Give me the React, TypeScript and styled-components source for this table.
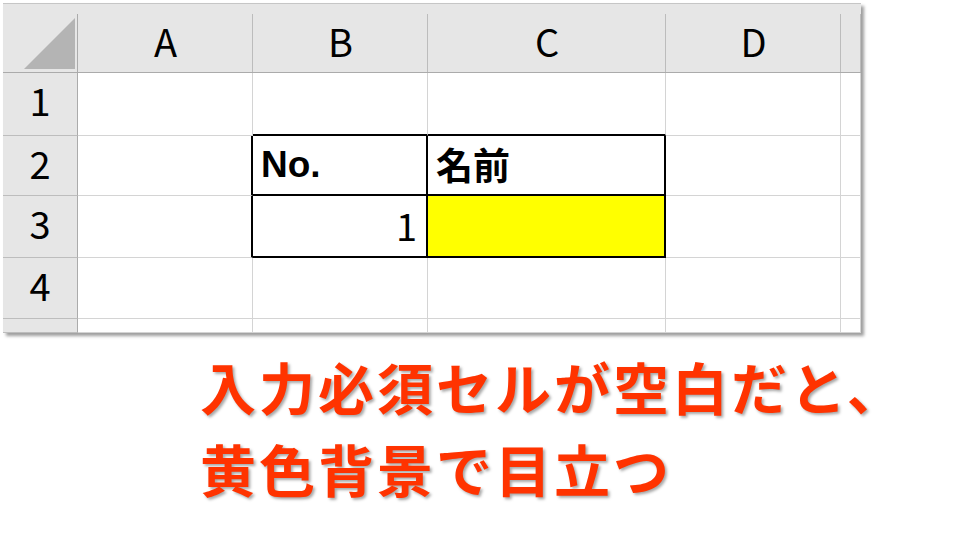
import React from "react";
import styled, { createGlobalStyle } from "styled-components";

const GlobalStyle = createGlobalStyle`
  html, body {
    margin: 0;
    padding: 0;
    background: #ffffff;
  }
  * {
    box-sizing: border-box;
  }
`;

const Page = styled.div`
  width: 955px;
  height: 555px;
  overflow: hidden;
  background: #ffffff;
  padding: 3px 0 0 3px;
`;

const Sheet = styled.div`
  display: grid;
  grid-template-columns: 75px 175px 175px 238px 175px 20px;
  grid-template-rows: 70px 63px 60px 62px 61px 14px;
  width: 858px;
  height: 330px;
  overflow: hidden;
  background: #ffffff;
  box-shadow: 3px 3px 3px rgba(0, 0, 0, 0.38);
  font-family: "Noto Sans CJK JP", "Noto Sans", sans-serif;
  color: #000000;
`;

const HeaderCell = styled.div`
  display: flex;
  align-items: center;
  justify-content: center;
  padding-top: 6px;
  border-top: 1px solid #c6c6c6;
  border-bottom: 1px solid #ababab;
  background: linear-gradient(#bcbcbc, #bcbcbc) right bottom / 1px
      calc(100% - 10px) no-repeat,
    #e6e6e6;
  font-size: 38px;
  font-weight: 400;
  line-height: 1;
`;

const CornerCell = styled(HeaderCell)`
  justify-content: flex-end;
  align-items: flex-end;
  padding: 0 3px 3px 0;
  background: linear-gradient(#ababab, #ababab) right bottom / 1px
      calc(100% - 10px) no-repeat,
    #e6e6e6;
`;

const Triangle = styled.div`
  width: 51px;
  height: 51px;
  background: #b4b4b4;
  clip-path: polygon(100% 0, 100% 100%, 0 100%);
`;

const RowLabel = styled.div`
  display: flex;
  align-items: flex-start;
  justify-content: center;
  padding-top: 2px;
  background: #e6e6e6;
  border-right: 1px solid #ababab;
  border-bottom: 1px solid #bdbdbd;
  font-size: 38px;
  line-height: 1.3;
`;

const Cell = styled.div<{
  $right?: "thin" | "thick";
  $bottom?: "thin" | "thick";
  $fill?: string;
  $align?: "left" | "right";
  $bold?: boolean;
  $latin?: boolean;
}>`
  display: flex;
  align-items: center;
  justify-content: ${(p) => (p.$align === "right" ? "flex-end" : "flex-start")};
  padding: 0 9px 2px 8px;
  background: ${(p) => p.$fill || "#ffffff"};
  border-right: ${(p) =>
    p.$right === "thick" ? "2px solid #000000" : "1px solid #d4d4d4"};
  border-bottom: ${(p) =>
    p.$bottom === "thick" ? "2px solid #000000" : "1px solid #d4d4d4"};
  font-family: ${(p) =>
    p.$latin
      ? `"Liberation Sans", Arial, sans-serif`
      : `"Noto Sans CJK JP", "Noto Sans", sans-serif`};
  font-size: ${(p) => (p.$bold ? "37px" : "38px")};
  font-weight: ${(p) => (p.$bold ? 700 : 400)};
  line-height: 1;
`;

const Caption = styled.div`
  margin: 12px 0 0 197px;
  font-family: "Noto Sans CJK JP", "Noto Sans", sans-serif;
  font-weight: 700;
  font-size: 56px;
  line-height: 82px;
  letter-spacing: 3px;
  color: #ff3300;
  text-shadow: 2px 2px 3px rgba(0, 0, 0, 0.35);
  white-space: nowrap;
`;

const columns = ["A", "B", "C", "D", ""];

export default function App() {
  return (
    <>
      <GlobalStyle />
      <Page>
        <Sheet>
          <CornerCell>
            <Triangle />
          </CornerCell>
          {columns.map((c, i) => (
            <HeaderCell key={i}>{c}</HeaderCell>
          ))}

          {/* row 1 */}
          <RowLabel>1</RowLabel>
          <Cell />
          <Cell $bottom="thick" />
          <Cell $bottom="thick" />
          <Cell />
          <Cell />

          {/* row 2 */}
          <RowLabel>2</RowLabel>
          <Cell $right="thick" />
          <Cell $right="thick" $bottom="thick" $bold $latin>
            No.
          </Cell>
          <Cell $right="thick" $bottom="thick" $bold>
            名前
          </Cell>
          <Cell />
          <Cell />

          {/* row 3 */}
          <RowLabel>3</RowLabel>
          <Cell $right="thick" />
          <Cell $right="thick" $bottom="thick" $align="right">
            1
          </Cell>
          <Cell $right="thick" $bottom="thick" $fill="#ffff00" />
          <Cell />
          <Cell />

          {/* row 4 */}
          <RowLabel>4</RowLabel>
          <Cell />
          <Cell />
          <Cell />
          <Cell />
          <Cell />

          {/* row 5, only its top shows */}
          <RowLabel>5</RowLabel>
          <Cell />
          <Cell />
          <Cell />
          <Cell />
          <Cell />
        </Sheet>

        <Caption>
          入力必須セルが空白だと、
          <br />
          黄色背景で目立つ
        </Caption>
      </Page>
    </>
  );
}
